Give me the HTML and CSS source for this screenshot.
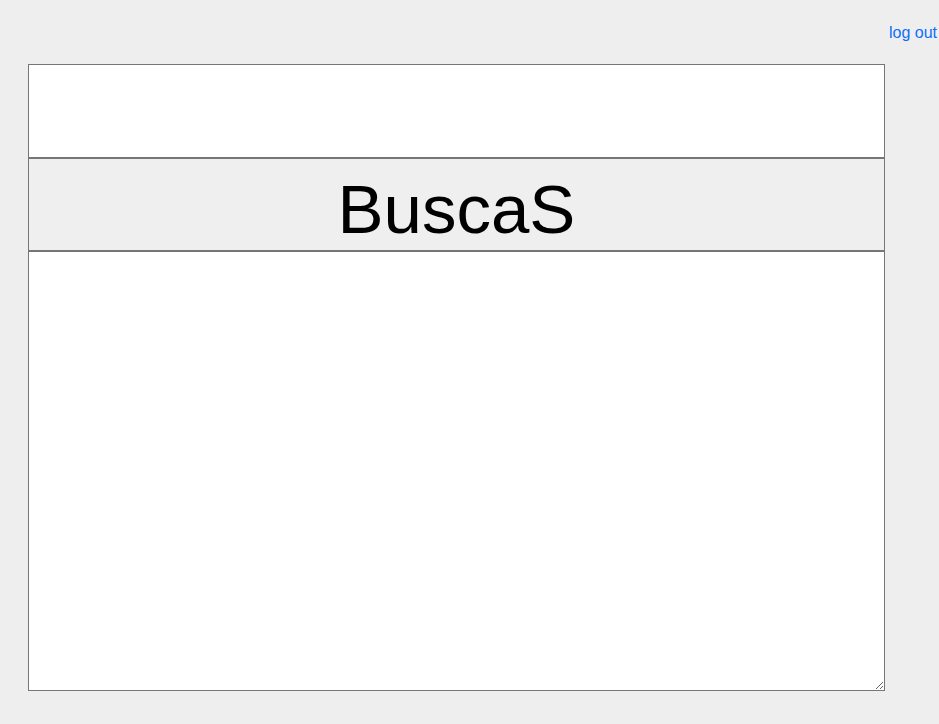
FILE: index.html
```html
<!DOCTYPE html>
<html lang="es">
<head>
<meta charset="utf-8">
<title>BuscaS</title>
<link rel="stylesheet" href="styles.css">
</head>
<body>
<header class="top">
  <a class="logout" href="#">log out</a>
</header>
<main class="panel">
  <input class="query" type="text">
  <button class="search" type="button">BuscaS</button>
  <textarea class="results"></textarea>
</main>
</body>
</html>
```
FILE: styles.css
```css
html, body {
  margin: 0;
  padding: 0;
  background: #eeeeee;
  font-family: "Liberation Sans", Arial, sans-serif;
}
.top {
  display: flex;
  justify-content: flex-end;
  padding: 24px 2px 0 0;
  height: 18px;
  line-height: 18px;
  font-size: 16px;
}
.logout {
  color: #0d6efd;
  text-decoration: none;
}
.panel {
  display: flex;
  flex-direction: column;
  width: 857px;
  margin: 22px 0 0 28px;
}
.query, .search, .results {
  box-sizing: border-box;
  width: 857px;
  margin: 0;
  border: 1px solid #767676;
  font-family: "Liberation Sans", Arial, sans-serif;
}
.query {
  height: 94px;
  background: #ffffff;
  padding: 0 4px;
  font-size: 16px;
  outline: none;
}
.search {
  height: 93px;
  background: #efefef;
  color: #000;
  font-size: 69px;
  padding: 10px 0 0 0;
  line-height: 1;
}
.results {
  height: 440px;
  background: #ffffff;
  padding: 2px;
  resize: vertical;
  outline: none;
}
```
